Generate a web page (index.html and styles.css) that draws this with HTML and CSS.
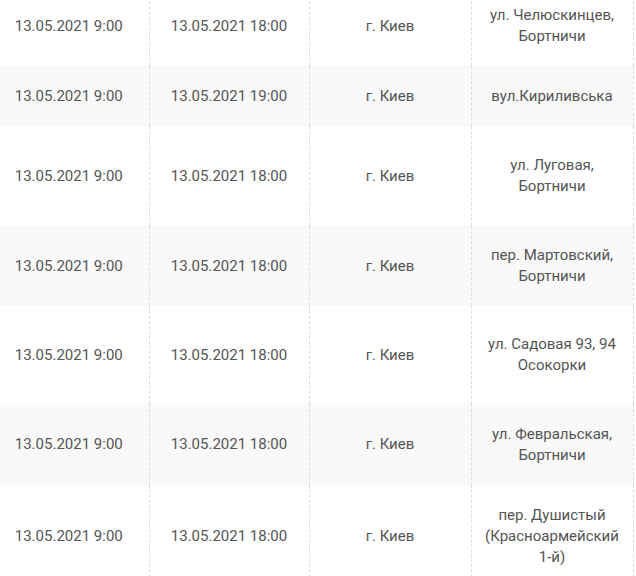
FILE: index.html
```html
<!DOCTYPE html>
<html lang="ru">
<head>
<meta charset="utf-8">
<title>Отключения</title>
<link rel="stylesheet" href="styles.css">
</head>
<body>
<table class="sched">
  <colgroup>
    <col class="c1"><col class="c2"><col class="c3"><col class="c4">
  </colgroup>
  <tbody>
    <tr class="r80"><td>13.05.2021 9:00</td><td>13.05.2021 18:00</td><td>г. Киев</td><td>ул. Челюскинцев, Бортничи</td></tr>
    <tr class="r60 alt"><td>13.05.2021 9:00</td><td>13.05.2021 19:00</td><td>г. Киев</td><td>вул.Кириливська</td></tr>
    <tr class="r100"><td>13.05.2021 9:00</td><td>13.05.2021 18:00</td><td>г. Киев</td><td>ул. Луговая, Бортничи</td></tr>
    <tr class="r80 alt"><td>13.05.2021 9:00</td><td>13.05.2021 18:00</td><td>г. Киев</td><td>пер. Мартовский, Бортничи</td></tr>
    <tr class="r98"><td>13.05.2021 9:00</td><td>13.05.2021 18:00</td><td>г. Киев</td><td>ул. Садовая 93, 94 Осокорки</td></tr>
    <tr class="r81 alt"><td>13.05.2021 9:00</td><td>13.05.2021 18:00</td><td>г. Киев</td><td>ул. Февральская, Бортничи</td></tr>
    <tr class="r102"><td>13.05.2021 9:00</td><td>13.05.2021 18:00</td><td>г. Киев</td><td>пер. Душистый (Красноармейский 1-й)</td></tr>
  </tbody>
</table>
</body>
</html>
```

FILE: styles.css
```css
html, body {
  margin: 0;
  padding: 0;
  background: #fff;
  overflow: hidden;
}

.sched {
  border-collapse: collapse;
  table-layout: fixed;
  width: 644px;
  margin: -14px 0 0 -11px;
  font-family: Roboto, "Liberation Sans", Arial, sans-serif;
  font-size: 15px;
  line-height: 21px;
  color: #555;
}

.c1 { width: 160px; }
.c2 { width: 160px; }
.c3 { width: 162px; }
.c4 { width: 162px; }

.sched td {
  padding: 0 12px;
  text-align: center;
  vertical-align: middle;
  border-left: 1px dashed #dcdcdc;
  border-right: 1px dashed #dcdcdc;
}

.sched td:first-child {
  border-left: none;
}

.alt td {
  background: #f9f9f9;
}

.r60 { height: 60px; }
.r80 { height: 80px; }
.r81 { height: 81px; }
.r98 { height: 98px; }
.r100 { height: 100px; }
.r102 { height: 102px; }
```
